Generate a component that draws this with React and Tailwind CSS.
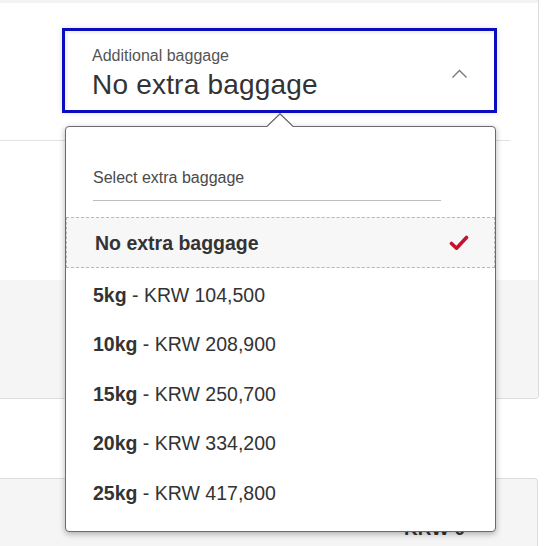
import React from "react";

const options = [
  ["5kg", "KRW 104,500"],
  ["10kg", "KRW 208,900"],
  ["15kg", "KRW 250,700"],
  ["20kg", "KRW 334,200"],
  ["25kg", "KRW 417,800"],
];

function Dropdown() {
  return (
    <div className="absolute left-0 top-[95px] z-10 h-[406px] w-[431px] rounded-[4px] border border-[#6b6b6b] bg-white shadow-[0_2px_6px_rgba(0,0,0,0.3)]">
      <svg
        className="absolute left-[201px] top-[-14px]"
        width="26"
        height="15"
        viewBox="0 0 26 15"
      >
        <polygon points="0.5,13 13,0.8 25.5,13 25.5,15 0.5,15" fill="#ffffff" />
        <polyline points="0,13.3 13,0.8 26,13.3" fill="none" stroke="#666666" strokeWidth="1.3" />
      </svg>
      <div className="ml-[27px] mr-[54px] border-b border-[#bdbdbd] pt-[41px] pb-[12px]">
        <div className="text-[16px] leading-[20px] text-[#4a4a4a]">Select extra baggage</div>
      </div>
      <div className="mt-[16px] flex h-[51px] items-center justify-between border border-dashed border-[#b8b8b8] bg-[#f7f7f7] pl-[28px] pr-[25px]">
        <span className="text-[19.5px] font-bold leading-[22px] text-[#333333]">No extra baggage</span>
        <svg width="20" height="16" viewBox="0 0 20 16">
          <polyline
            points="2.5,8.5 7.5,13.2 17.5,2.5"
            fill="none"
            stroke="#c41230"
            strokeWidth="3.6"
            strokeLinecap="round"
            strokeLinejoin="round"
          />
        </svg>
      </div>
      <div className="mt-[2px] flex flex-col">
        {options.map(([kg, price]) => (
          <div key={kg} className="flex h-[49.5px] items-center pl-[27px] text-[19.5px] leading-[22px] text-[#333333]">
            <span className="font-bold">{kg}</span>
            <span>&nbsp;- {price}</span>
          </div>
        ))}
      </div>
    </div>
  );
}

export default function App() {
  return (
    <div className="relative h-[546px] w-[548px] overflow-hidden bg-white font-['Liberation_Sans',Arial,sans-serif]">
      <div className="w-[539px] rounded-br-[4px] border-r border-b border-[#dcdcdc]">
        <div className="h-[3px] bg-[#f3f3f3]" />
        <div className="mr-[28px] h-[138px] border-b border-[#e2e2e2] pt-[25px] pl-[62px]">
          <div className="relative h-[85px] w-[435px] border-[3px] border-[#0c0cbf] bg-white shadow-[0_0_6px_rgba(0,0,0,0.12),inset_2px_2px_3px_rgba(0,0,0,0.07)]">
            <div className="flex h-full items-center pl-[27px] pr-[26px]">
              <div className="flex flex-1 flex-col pt-[5px]">
                <span className="text-[16px] leading-[20px] text-[#555555]">Additional baggage</span>
                <span className="mt-[3px] text-[28px] leading-[32px] tracking-[0.2px] text-[#333333]">No extra baggage</span>
              </div>
              <svg className="mt-[7px]" width="17" height="10" viewBox="0 0 17 10">
                <polyline points="1.5,8.5 8.5,1.5 15.5,8.5" fill="none" stroke="#7a7a7a" strokeWidth="1.4" />
              </svg>
            </div>
            <Dropdown />
          </div>
        </div>
        <div className="h-[139px] bg-white" />
        <div className="h-[118px] rounded-br-[3px] bg-[#f5f5f5]" />
      </div>
      <div className="mt-[79px] flex h-[68px] w-[538px] justify-end rounded-tr-[4px] border-t border-r border-[#dcdcdc] bg-[#f5f5f5] pt-[39px] pr-[72px]">
        <span className="text-[19px] font-bold leading-[22px] text-[#333333]">KRW 0</span>
      </div>
    </div>
  );
}
